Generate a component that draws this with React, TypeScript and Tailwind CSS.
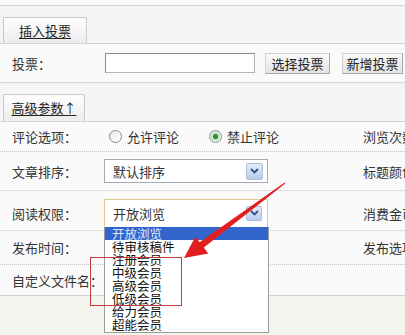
import React from "react";

const font = { fontFamily: '"Noto Sans CJK SC", "Noto Sans", sans-serif' };

function Chevron() {
  return (
    <svg width="9" height="6" viewBox="0 0 9 6">
      <path d="M1 1 L4.5 4.5 L8 1" fill="none" stroke="#2f4f8f" strokeWidth="1.8" />
    </svg>
  );
}

function ArrowBtn({ cls }: { cls: string }) {
  return (
    <div className={`flex shrink-0 items-center justify-center rounded-[2px] border border-[#a9bde0] bg-gradient-to-b from-[#e6edf9] to-[#b9cbe9] ${cls}`}>
      <Chevron />
    </div>
  );
}

function Radio({ checked }: { checked?: boolean }) {
  return (
    <div className="flex h-[13px] w-[13px] shrink-0 items-center justify-center rounded-full border border-[#7f8c97] bg-gradient-to-br from-[#e9ecef] to-white">
      {checked && <div className="h-[5px] w-[5px] rounded-full bg-[#2f8a35] ring-2 ring-[#bfe3b9]" />}
    </div>
  );
}

function Tab({ label, cls }: { label: string; cls: string }) {
  return (
    <div className={`flex items-center justify-center rounded-tr-[3px] border border-b-0 border-[#c9c9c9] bg-gradient-to-b from-white to-[#ececec] text-[13px] text-[#222] ${cls}`}>
      <span className="underline underline-offset-2">{label}</span>
    </div>
  );
}

export default function App() {
  const items = ["开放浏览", "待审核稿件", "注册会员", "中级会员", "高级会员", "低级会员", "给力会员", "超能会员"];
  return (
    <div className="relative h-[335px] w-[405px] overflow-hidden bg-[#f4f4ef] text-[#333]" style={font}>
      <div className="h-[6px] border-b border-[#d6d6d6] bg-[#fbfbfb]" />
      <div className="flex h-[38px] items-end border-b border-[#d3d3d3] bg-[#f5f5f5] pl-[3px]">
        <Tab label="插入投票" cls="h-[26px] w-[84px]" />
      </div>
      <div className="flex h-[39px] items-center border-b border-[#d6d6d6] bg-[#fafafa]">
        <div className="w-[105px] shrink-0 pl-[12px] text-[13px] leading-none">投票：</div>
        <div className="h-[20px] w-[150px] shrink-0 border border-[#b5b5b5] border-l-[#8a8a8a] border-t-[#8a8a8a] bg-white" />
        <div className="ml-[10px] flex h-[21px] w-[65px] shrink-0 items-center justify-center border border-[#cfcfcf] border-b-[#a8a8a8] border-r-[#a8a8a8] bg-gradient-to-b from-[#fbfbfb] to-[#e2e2e2] text-[13px] leading-none text-[#222]">选择投票</div>
        <div className="ml-[12px] flex h-[21px] w-[61px] shrink-0 items-center justify-center border border-[#cfcfcf] border-b-[#a8a8a8] border-r-[#a8a8a8] bg-gradient-to-b from-[#fbfbfb] to-[#e2e2e2] text-[13px] leading-none text-[#222]">新增投票</div>
      </div>
      <div className="flex h-[39px] items-end border-b border-[#d3d3d3] bg-[#f5f5f5] pl-[3px]">
        <Tab label="高级参数↑" cls="h-[27px] w-[82px]" />
      </div>
      <div className="bg-[#fafafa] text-[13px] leading-none">
        <div className="flex h-[30px] items-center border-b border-dotted border-[#c4c4c4]">
          <div className="w-[109px] shrink-0 pl-[12px]">评论选项：</div>
          <div className="flex w-[254px] shrink-0 items-center">
            <Radio />
            <span className="ml-[5px]">允许评论</span>
            <div className="ml-[30px]"><Radio checked /></div>
            <span className="ml-[5px]">禁止评论</span>
          </div>
          <div className="shrink-0 whitespace-nowrap">浏览次数</div>
        </div>
        <div className="flex h-[39px] items-center border-b border-dotted border-[#c4c4c4]">
          <div className="w-[104px] shrink-0 pl-[12px]">文章排序：</div>
          <div className="w-[259px] shrink-0">
            <div className="flex h-[24px] w-[164px] items-center justify-between border border-[#a4abb4] bg-white pl-[8px] pr-[4px]">
              <span>默认排序</span>
              <ArrowBtn cls="h-[17px] w-[17px]" />
            </div>
          </div>
          <div className="shrink-0 whitespace-nowrap">标题颜色</div>
        </div>
        <div className="flex h-[40px] items-center border-b border-dotted border-[#c4c4c4]">
          <div className="mt-[5px] w-[104px] shrink-0 pl-[12px]">阅读权限：</div>
          <div className="mt-[5px] w-[259px] shrink-0">
            <div className="relative flex h-[29px] w-[164px] items-center justify-between border border-[#dccb91] bg-white pl-[8px] pr-[5px]">
              <span>开放浏览</span>
              <ArrowBtn cls="h-[15px] w-[16px]" />
              <div className="absolute left-[-1px] top-full z-10 h-[106px] w-[165px] border-x border-b border-[#9a9a9a] bg-white text-[12.5px] leading-[13px] text-[#111]">
                {items.map((t, i) => (
                  <div key={t} className={`h-[13px] whitespace-nowrap pl-[7px] ${i === 0 ? "bg-[#3366cc] text-[#dfe8ff]" : ""}`}>{t}</div>
                ))}
              </div>
            </div>
          </div>
          <div className="mt-[5px] shrink-0 whitespace-nowrap">消费金币</div>
        </div>
        <div className="flex h-[34px] items-center border-b border-dotted border-[#c4c4c4]">
          <div className="w-[363px] shrink-0 pl-[12px]">发布时间：</div>
          <div className="shrink-0 whitespace-nowrap">发布选项</div>
        </div>
        <div className="flex h-[31px] items-center border-b border-[#d3d3d3]">
          <div className="pl-[12px]">自定义文件名：</div>
        </div>
      </div>
      <div className="pointer-events-none absolute left-[90px] top-[257px] z-20 h-[49px] w-[92px] border-[1.5px] border-[#c23a3a]" />
      <svg className="pointer-events-none absolute left-0 top-0 z-30" width="405" height="335">
        <polygon
          points="285.3,183.4 203.8,247.6 208.2,253.4 184,258 195.5,236.6 199.6,242.2 284.7,182.6"
          fill="#e31e1e"
        />
      </svg>
    </div>
  );
}
